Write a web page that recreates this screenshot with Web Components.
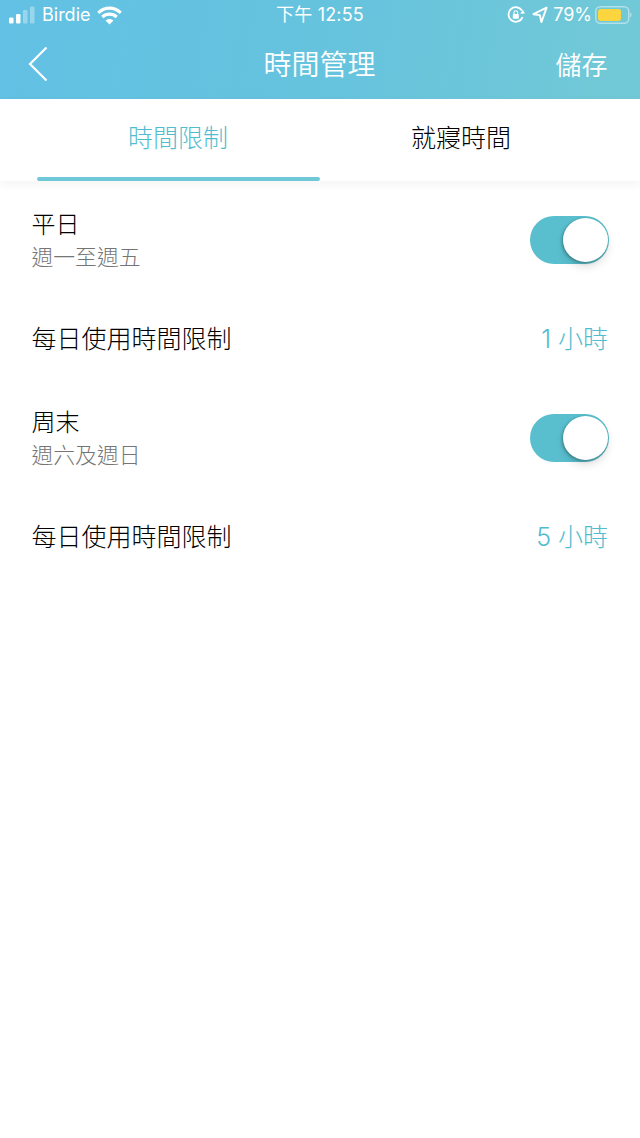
<!DOCTYPE html>
<html lang="zh-Hant"><head><meta charset="utf-8">
<style>
html,body{margin:0;padding:0;background:#fff;}
body{width:640px;height:1138px;overflow:hidden;font-family:"Noto Sans CJK TC","Noto Sans",sans-serif;font-weight:300;}
</style></head><body>
<app-screen>
  <nav-header title="時間管理" action="儲存"></nav-header>
  <tab-bar first="時間限制" second="就寢時間"></tab-bar>
  <setting-list>
    <toggle-row label="平日" sub="週一至週五"></toggle-row>
    <value-row label="每日使用時間限制" value="1 小時"></value-row>
    <toggle-row label="周末" sub="週六及週日"></toggle-row>
    <value-row label="每日使用時間限制" value="5 小時"></value-row>
  </setting-list>
</app-screen>
<script>
const def=(name,render)=>customElements.define(name,class extends HTMLElement{
  connectedCallback(){ if(this.shadowRoot) return; this.attachShadow({mode:'open'}).innerHTML=render(this); }
});
def('app-screen',()=>`<style>:host{display:flex;flex-direction:column;width:640px;height:1138px;background:#fff}</style><slot></slot>`);
def('nav-header',el=>`<style>
:host{display:block;height:99px;background:linear-gradient(100deg,#62c1e4 0%,#66c3de 50%,#72c9d6 100%);color:#fff}
.status{height:30px;display:flex;align-items:center;justify-content:space-between;padding:0 8px 0 9px;font:400 18px/30px "Inter","Liberation Sans",sans-serif;position:relative}
.l,.r{display:flex;align-items:center}
.l span{font-size:18px}
.l svg.w{margin-left:6px}
.clock{position:absolute;left:0;right:0;text-align:center;font-family:"Inter","Noto Sans CJK TC",sans-serif;font-size:18px;letter-spacing:.2px}
.r svg{display:block}
.pct{margin:0 3px 0 5px;font-size:18px}
.nav{height:69px;display:flex;align-items:center;justify-content:space-between;padding:0 32.500px 0 28px;position:relative}
.title{position:absolute;left:0;right:1px;text-align:center;font-size:28px;line-height:67px;top:0;font-weight:350}
.act{font-size:26px;line-height:67px;padding-bottom:2px;font-weight:350}
.back{display:block;padding-bottom:2px}
</style>
<div class="status">
 <div class="l">
  <svg width="28" height="18" viewBox="0 0 28 18"><rect x="0" y="11.500" width="4.500" height="6" rx="1.200" fill="#fff"/><rect x="7" y="8" width="4.500" height="9.500" rx="1.200" fill="#fff"/><rect x="14" y="4" width="4.500" height="13.500" rx="1.200" fill="#fff" fill-opacity=".35"/><rect x="21" y="0.500" width="4.500" height="17" rx="1.200" fill="#fff" fill-opacity=".35"/></svg>
  <span style="margin-left:5px">Birdie</span>
  <svg class="w" width="25" height="19" viewBox="0 0 25 19" fill="none" stroke="#fff" stroke-width="3.200"><path d="M1.300 6.800C8 .6 17 .6 23.700 6.800"/><path d="M5.300 11c4.200-3.800 10.200-3.800 14.400 0"/><path d="M12.500 18.500l-4-4c2.200-2.100 5.800-2.100 8 0z" fill="#fff" stroke="none"/></svg>
 </div>
 <div class="clock">下午 12:55</div>
 <div class="r">
  <svg width="18" height="18" viewBox="0 0 18 18" fill="none"><path d="M15.600 11.200A7.300 7.300 0 1 1 15 4.600" stroke="#fff" stroke-width="1.800"/><path d="M17.900 7.600l-4.600.1 2.600-4z" fill="#fff"/><rect x="5.800" y="8" width="6" height="4.800" rx=".8" fill="#fff"/><path d="M7 8V6.600a1.800 1.800 0 0 1 3.600 0V8" stroke="#fff" stroke-width="1.100"/></svg>
  <svg style="margin-left:7px" width="16" height="18" viewBox="0 0 16 18" fill="none"><path d="M14.600 1.600L1.400 8.200l6.400.9 1.600 7z" stroke="#fff" stroke-width="1.900" stroke-linejoin="round"/></svg>
  <span class="pct">79%</span>
  <svg width="37" height="18" viewBox="0 0 37 18"><rect x=".75" y=".75" width="33" height="16.500" rx="4.500" fill="none" stroke="#fff" stroke-opacity=".45" stroke-width="1.500"/><rect x="3" y="3" width="23" height="12" rx="2.400" fill="#fdd63f"/><path d="M35 6.600c1 .4 1.500 1.200 1.500 2.400s-.5 2-1.500 2.400z" fill="#fff" fill-opacity=".45"/></svg>
 </div>
</div>
<div class="nav">
 <svg class="back" width="20" height="36" viewBox="0 0 20 36" fill="none"><path d="M18.500 1.500L2 18l16.500 16.500" stroke="#fff" stroke-width="2.200"/></svg>
 <div class="title">${el.getAttribute('title')}</div>
 <div class="act">${el.getAttribute('action')}</div>
</div>`);
def('tab-bar',el=>`<style>
:host{display:block;height:82px;background:#fff;box-shadow:0 3px 10px rgba(0,0,0,.05);position:relative}
.tabs{display:grid;grid-template-columns:283px 283px;margin-left:37px;height:82px;font-size:25px;line-height:75px;text-align:center}
.t{position:relative;color:#000;padding-right:1px}
.on{color:#52bccf}
.on::after{content:"";position:absolute;left:0;right:0;bottom:0;height:4px;border-radius:2px;background:#6fc8d8}
</style><div class="tabs"><div class="t on">${el.getAttribute('first')}</div><div class="t">${el.getAttribute('second')}</div></div>`);
def('setting-list',()=>`<style>:host{display:block;padding-top:9px}</style><slot></slot>`);
const rowCss=`:host{display:flex;align-items:center;justify-content:space-between;height:99px;padding:0 32px 0 31.500px;color:#000}`;
def('toggle-row',el=>`<style>${rowCss}
.t{padding-bottom:1px}
.a{font-size:24px;line-height:33px}
.b{font-size:21.800px;line-height:34px;color:#757575}
.sw{width:79px;height:48px;border-radius:24px;background:#59bfce;position:relative;margin-right:-1px}
.k{position:absolute;right:1px;top:2px;width:45px;height:44px;border-radius:50%;background:#fff;box-shadow:-1px 1px 3px rgba(0,0,0,.3),0 5px 8px rgba(0,0,0,.12)}
</style><div class="t"><div class="a">${el.getAttribute('label')}</div><div class="b">${el.getAttribute('sub')}</div></div><div class="sw"><div class="k"></div></div>`);
def('value-row',el=>`<style>${rowCss}
:host{padding-bottom:3px;height:96px}
.a{font-size:25px}
.v{font-family:"Inter","Noto Sans CJK TC",sans-serif;font-size:25px;color:#52bccf}
</style><div class="a">${el.getAttribute('label')}</div><div class="v">${el.getAttribute('value')}</div>`);
</script>
</body></html>
